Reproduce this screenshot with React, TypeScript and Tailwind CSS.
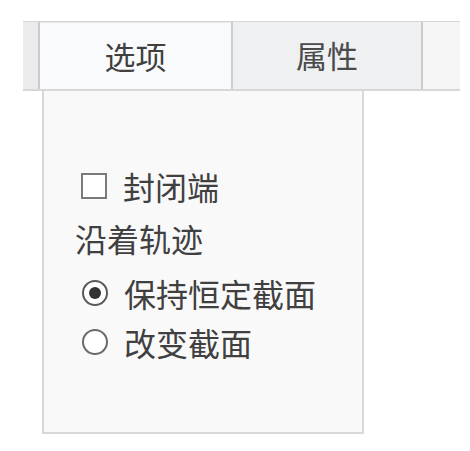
export default function App() {
  const font = { fontFamily: '"Microsoft YaHei", "Noto Sans CJK SC", sans-serif' };

  return (
    <div className="w-[470px] h-[451px] bg-white text-[#404040]" style={font}>
      <div className="pt-[21px] pl-[23px]">
        {/* tab strip */}
        <div className="flex w-[437px] h-[70px] border-t border-b-2 border-[#d6d7d9] bg-[#f3f3f4]">
          <div className="w-[17px] bg-[#ebebed] border-r-2 border-[#c9cbce]" />
          <div className="w-[191px] flex items-center justify-center bg-[#f9fafb] text-[31px] border-t border-[#e4e5e7]">
            选项
          </div>
          <div className="w-[2px] bg-[#ccced1]" />
          <div className="w-[190px] flex items-center justify-center bg-[#eef0f2] text-[31px] text-[#4a4a4a] border-r-2 border-[#c9cbce]">
            属性
          </div>
          <div className="flex-1 bg-[#f6f6f6]" />
        </div>

        {/* panel */}
        <div className="ml-[19px] w-[322px] h-[343px] border-2 border-t-0 border-[#d7d8da] bg-[#f9f9fa] text-[32px] leading-none">
          <div className="pt-[79px] pl-[37px] flex items-center gap-[16px]">
            <span className="w-[26px] h-[26px] border-2 border-[#7a7a7a] bg-white" />
            <span>封闭端</span>
          </div>
          <div className="pt-[20px] pl-[31px]">沿着轨迹</div>
          <div className="pt-[23px] pl-[38px] flex items-center gap-[16px]">
            <span className="w-[26px] h-[26px] rounded-full border-2 border-[#5a5a5a] bg-white flex items-center justify-center">
              <span className="w-[12px] h-[12px] rounded-full bg-[#333]" />
            </span>
            <span>保持恒定截面</span>
          </div>
          <div className="pt-[17px] pl-[38px] flex items-center gap-[16px]">
            <span className="w-[26px] h-[26px] rounded-full border-2 border-[#6a6a6a] bg-white" />
            <span>改变截面</span>
          </div>
        </div>
      </div>
    </div>
  );
}
